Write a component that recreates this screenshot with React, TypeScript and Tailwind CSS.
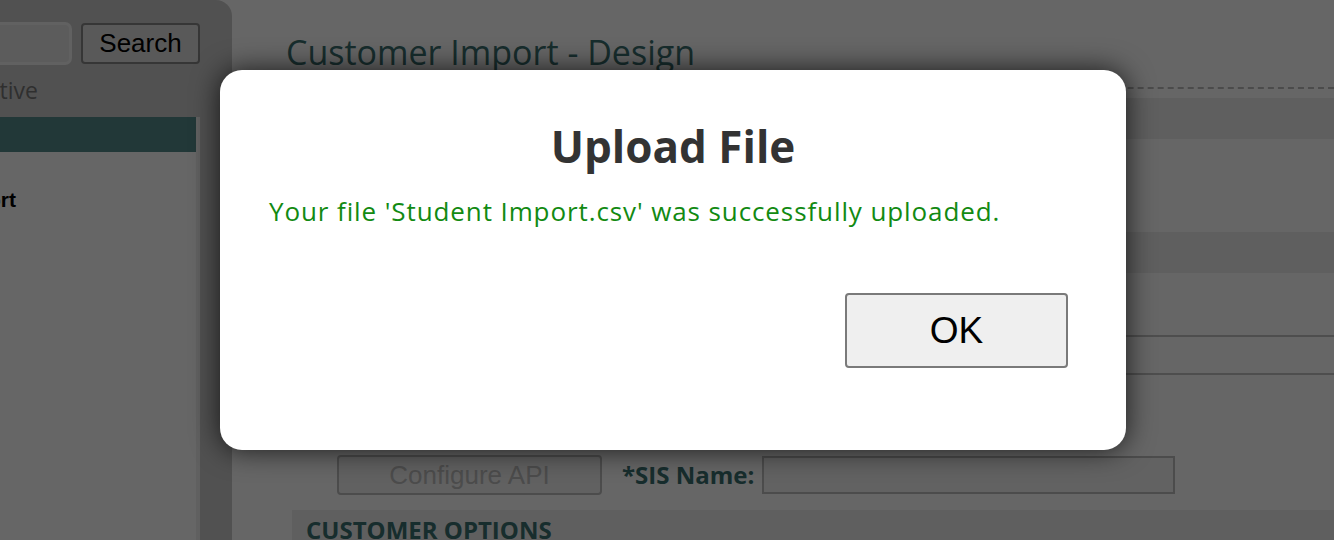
import React from "react";

const trebu = { fontFamily: '"Open Sans", "Noto Sans", sans-serif' } as React.CSSProperties;

export default function App() {
  return (
    <div className="relative w-[1334px] h-[540px] overflow-hidden bg-white flex" style={{ fontFamily: '"Liberation Sans", Arial, sans-serif' }}>
      {/* Sidebar */}
      <aside className="w-[232px] shrink-0 h-full bg-[#cbcbcb] rounded-tr-[16px] flex flex-col overflow-hidden">
        <div className="shrink-0 flex justify-end items-center gap-[9px] pr-[32px] pt-[22px] h-[64px]">
          <div className="w-[200px] h-[43px] shrink-0 rounded-[7px] border-[3px] border-[#f2f2f2] bg-[#e6e6e6]" />
          <button className="w-[119px] h-[41px] shrink-0 rounded-[4px] border-2 border-[#888] bg-[#dedede] text-[26px] text-black leading-none">Search</button>
        </div>
        <div className="shrink-0 w-[38px] h-[53px] flex justify-end items-center whitespace-nowrap text-[23px] text-[#777]" style={trebu}>
          <span>Show Inactive</span>
        </div>
        <div className="w-[200px] flex-1 bg-white border-r-4 border-[#f0f0f0] flex flex-col">
          <div className="shrink-0 h-[35px] bg-[#558c8c]" />
          <div className="shrink-0 w-[16px] h-[96px] flex justify-end items-center whitespace-nowrap text-[21px] font-bold text-black">
            <span>Customer Import</span>
          </div>
        </div>
      </aside>

      {/* Main */}
      <main className="flex-1 flex flex-col">
        <div className="shrink-0 pl-[54px] h-[90px] flex flex-col">
          <h1 className="pt-[30px] text-[34px] leading-[44px] text-[#3b7070] whitespace-nowrap" style={trebu}>Customer Import - Design</h1>
          <div className="mt-auto mb-[1px] border-b-2 border-dashed border-[#bcbcbc]" />
        </div>
        <div className="shrink-0 pl-[60px] mt-[8px] flex flex-col">
          <div className="shrink-0 h-[41px] bg-[#eeeeee]" />
          <div className="shrink-0 h-[93px]" />
          <div className="shrink-0 h-[41px] bg-[#eeeeee]" />
          <div className="shrink-0 h-[62px]" />
          <div className="shrink-0 h-[2px] bg-[#c4c4c4]" />
          <div className="shrink-0 h-[36px]" />
          <div className="shrink-0 h-[2px] bg-[#c4c4c4]" />
          <div className="shrink-0 h-[79px]" />
          <div className="shrink-0 h-[41px] flex items-center">
            <button className="ml-[45px] w-[265px] h-[40px] rounded-[4px] border-2 border-[#bdbdbd] bg-[#f3f3f3] text-[26px] text-[#bdbdbd] leading-none">Configure API</button>
            <span className="ml-[20px] text-[24px] font-bold text-[#3b7070] whitespace-nowrap" style={trebu}>*SIS Name:</span>
            <div className="ml-[8px] w-[413px] h-[38px] border-2 border-[#bdbdbd] bg-[#f6f6f6]" />
          </div>
          <div className="shrink-0 h-[15px]" />
          <div className="shrink-0 h-[40px] bg-[#eeeeee] pl-[14px] flex items-center">
            <span className="text-[24px] font-bold text-[#3b7070] whitespace-nowrap" style={trebu}>CUSTOMER OPTIONS</span>
          </div>
        </div>
      </main>

      {/* Overlay */}
      <div className="absolute inset-0 bg-black/60" />

      {/* Modal */}
      <div className="absolute left-[220px] top-[70px] w-[906px] h-[380px] bg-white rounded-[22px] shadow-[0_0_28px_rgba(0,0,0,0.75)] flex flex-col">
        <h2 className="mt-[46px] text-center text-[44px] leading-[60px] font-bold text-[#333]" style={trebu}>Upload File</h2>
        <p className="mt-[19px] pl-[49px] text-[26px] leading-[32px] tracking-[0.9px] text-[#128a12] whitespace-nowrap" style={trebu}>
          Your file 'Student Import.csv' was successfully uploaded.
        </p>
        <div className="mt-[66px] flex justify-end pr-[58px]">
          <button className="w-[223px] h-[75px] rounded-[4px] border-2 border-[#7a7a7a] bg-[#efefef] text-[37px] text-black leading-none">OK</button>
        </div>
      </div>
    </div>
  );
}
